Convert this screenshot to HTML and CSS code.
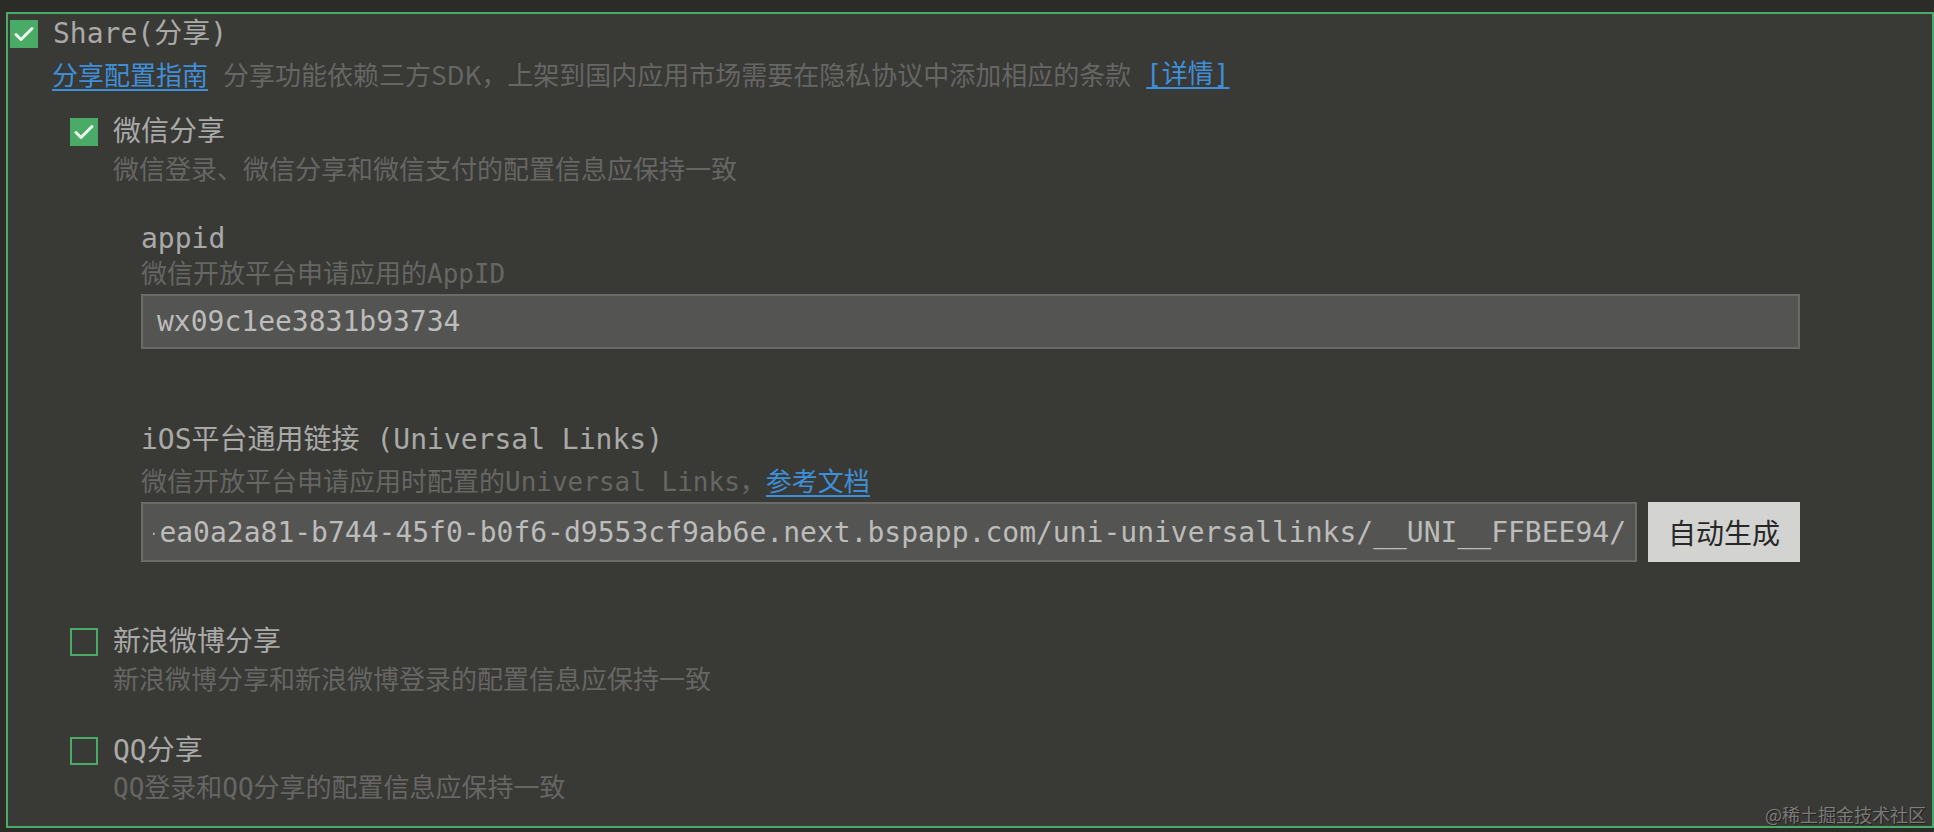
FILE: index.html
```html
<!DOCTYPE html>
<html lang="zh-CN">
<head>
<meta charset="utf-8">
<title>Share</title>
<link rel="stylesheet" href="styles.css">
</head>
<body>
<div class="panel">
  <div class="check-row">
    <span class="cb cb-on"><svg viewBox="0 0 28 28" width="28" height="28"><polyline points="6,14.5 11,19.5 22,8.5" fill="none" stroke="#eef8ee" stroke-width="3" stroke-linecap="round" stroke-linejoin="round"/></svg></span>
    <span class="title">Share(分享)</span>
  </div>
  <div class="guide">
    <a class="link">分享配置指南</a>
    <span class="note">分享功能依赖三方SDK，上架到国内应用市场需要在隐私协议中添加相应的条款</span>
    <a class="link link-mono">[详情]</a>
  </div>

  <div class="item item-first">
    <div class="check-row">
      <span class="cb cb-on"><svg viewBox="0 0 28 28" width="28" height="28"><polyline points="6,14.5 11,19.5 22,8.5" fill="none" stroke="#eef8ee" stroke-width="3" stroke-linecap="round" stroke-linejoin="round"/></svg></span>
      <span class="title">微信分享</span>
    </div>
    <div class="desc item-desc">微信登录、微信分享和微信支付的配置信息应保持一致</div>
    <div class="fields">
      <div class="field">
        <div class="field-label">appid</div>
        <div class="desc field-desc">微信开放平台申请应用的AppID</div>
        <div class="input input-1">wx09c1ee3831b93734</div>
      </div>
      <div class="field field-2">
        <div class="field-label">iOS平台通用链接 (Universal Links)</div>
        <div class="desc field-desc2">微信开放平台申请应用时配置的Universal Links，<a class="link link-doc">参考文档</a></div>
        <div class="input-row">
          <div class="input input-end"><div class="input-clip"><span class="input-text">https://static-mp-ea0a2a81-b744-45f0-b0f6-d9553cf9ab6e.next.bspapp.com/uni-universallinks/__UNI__FFBEE94/</span></div></div>
          <button class="btn">自动生成</button>
        </div>
      </div>
    </div>
  </div>

  <div class="item item-weibo">
    <div class="check-row">
      <span class="cb cb-off"></span>
      <span class="title">新浪微博分享</span>
    </div>
    <div class="desc item-desc">新浪微博分享和新浪微博登录的配置信息应保持一致</div>
  </div>

  <div class="item item-qq">
    <div class="check-row">
      <span class="cb cb-off"></span>
      <span class="title">QQ分享</span>
    </div>
    <div class="desc item-desc2">QQ登录和QQ分享的配置信息应保持一致</div>
  </div>
</div>
<div class="watermark">@稀土掘金技术社区</div>
</body>
</html>
```

FILE: styles.css
```css
html, body {
  margin: 0;
  padding: 0;
}
body {
  background: #2b2b28;
  width: 1934px;
  height: 832px;
  overflow: hidden;
  position: relative;
  font-family: "DejaVu Sans Mono", "Noto Sans CJK SC", monospace;
}
.panel {
  box-sizing: border-box;
  margin: 12px 0 0 6px;
  width: 1928px;
  height: 816px;
  border: 2px solid #4aab67;
  background: #393936;
  padding: 6px 0 0 2px;
}
.check-row {
  display: flex;
  align-items: center;
  gap: 15px;
  height: 28px;
}
.cb {
  box-sizing: border-box;
  width: 28px;
  height: 28px;
  flex: none;
  display: block;
}
.cb svg { display: block; }
.cb-on { background: #4aab67; }
.cb-off { border: 2px solid #4aab67; }
.title {
  font-size: 28px;
  line-height: 28px;
  color: #a9a9a8;
  white-space: nowrap;
}
.guide {
  margin: 9px 0 0 42px;
  display: flex;
  gap: 15px;
  font-family: "Noto Sans CJK SC", sans-serif;
  font-size: 26px;
  line-height: 34px;
  white-space: nowrap;
}
.link {
  color: #3f8fd8;
  text-decoration: underline;
  text-underline-offset: 4px;
  text-decoration-thickness: 2px;
}
.link-mono {
  font-family: "DejaVu Sans Mono", "Noto Sans CJK SC", monospace;
}
.note { color: #666664; }
.item { margin-left: 60px; }
.item-first { margin-top: 27px; }
.item-weibo { margin-top: 66px; }
.item-qq { margin-top: 40px; }
.desc {
  font-size: 26px;
  line-height: 34px;
  color: #666664;
  white-space: nowrap;
}
.item-desc { margin: 7px 0 0 43px; }
.item-desc2 { margin: 6px 0 0 43px; }
.fields { margin-left: 71px; }
.field { margin-top: 35px; }
.field-2 { margin-top: 74px; }
.field-label {
  font-size: 28px;
  line-height: 34px;
  color: #a9a9a8;
  white-space: nowrap;
}
.field-desc { margin-top: 1px; }
.field-desc2 { margin-top: 6px; }
.link-doc {
  font-family: "Noto Sans CJK SC", sans-serif;
  font-size: 26px;
}
.input {
  box-sizing: border-box;
  border: 2px solid #6a6a68;
  background: #545453;
  color: #bcbcbb;
  font-size: 28px;
  white-space: nowrap;
  overflow: hidden;
}
.input-1 {
  margin-top: 3px;
  width: 1659px;
  height: 55px;
  line-height: 51px;
  padding-left: 14px;
}
.input-row {
  margin-top: 3px;
  display: flex;
  gap: 11px;
  width: 1659px;
  height: 60px;
}
.input-end {
  flex: 1;
  min-width: 0;
  display: flex;
  padding: 0 9px 0 10px;
}
.input-clip {
  flex: 1;
  min-width: 0;
  overflow: hidden;
  display: flex;
  justify-content: flex-end;
  align-items: center;
}
.input-text { flex: none; }
.btn {
  width: 152px;
  flex: none;
  border: none;
  margin: 0;
  padding: 0;
  background: #d3d3d1;
  color: #282828;
  font-family: "Noto Sans CJK SC", sans-serif;
  font-size: 28px;
}
.watermark {
  position: absolute;
  right: 8px;
  bottom: 8px;
  font-family: "Noto Sans CJK SC", sans-serif;
  font-size: 18px;
  line-height: 20px;
  color: rgba(190, 190, 190, 0.55);
  text-shadow: 1px 1px 1px rgba(0, 0, 0, 0.45);
}
```
